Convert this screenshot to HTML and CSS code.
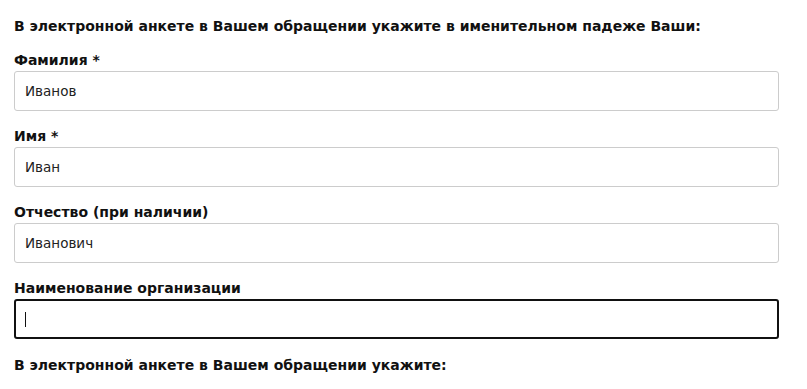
FILE: index.html
```html
<!DOCTYPE html>
<html lang="ru">
<head>
<meta charset="utf-8">
<link rel="stylesheet" href="styles.css">
</head>
<body>
<div class="form">
  <p class="heading">В электронной анкете в Вашем обращении укажите в именительном падеже Ваши:</p>
  <div class="field">
    <label class="label">Фамилия *</label>
    <div class="input">Иванов</div>
  </div>
  <div class="field">
    <label class="label">Имя *</label>
    <div class="input">Иван</div>
  </div>
  <div class="field">
    <label class="label">Отчество (при наличии)</label>
    <div class="input">Иванович</div>
  </div>
  <div class="field">
    <label class="label">Наименование организации</label>
    <div class="input focused"><span class="caret"></span></div>
  </div>
  <p class="heading second">В электронной анкете в Вашем обращении укажите:</p>
</div>
</body>
</html>
```
FILE: styles.css
```css
html, body {
  margin: 0;
  padding: 0;
  background: #ffffff;
}
.form {
  padding: 18px 28px 0 14px;
  font-family: "DejaVu Sans", Verdana, sans-serif;
  color: #111111;
}
.heading {
  margin: 0;
  font-size: 14px;
  font-weight: bold;
  line-height: 17px;
}
.second {
  margin-top: 18px;
}
.field {
  margin-top: 17px;
}
.label {
  display: block;
  font-size: 14px;
  font-weight: bold;
  line-height: 17px;
  margin-bottom: 2px;
}
.input {
  box-sizing: border-box;
  height: 40px;
  border: 1px solid #cccccc;
  border-radius: 3px;
  padding: 0 10px;
  font-size: 13.5px;
  line-height: 38px;
  color: #222222;
  display: flex;
  align-items: center;
}
.focused {
  border: 2px solid #111111;
  padding: 0 9px;
}
.caret {
  display: block;
  width: 1px;
  height: 15px;
  background: #111111;
}
```
